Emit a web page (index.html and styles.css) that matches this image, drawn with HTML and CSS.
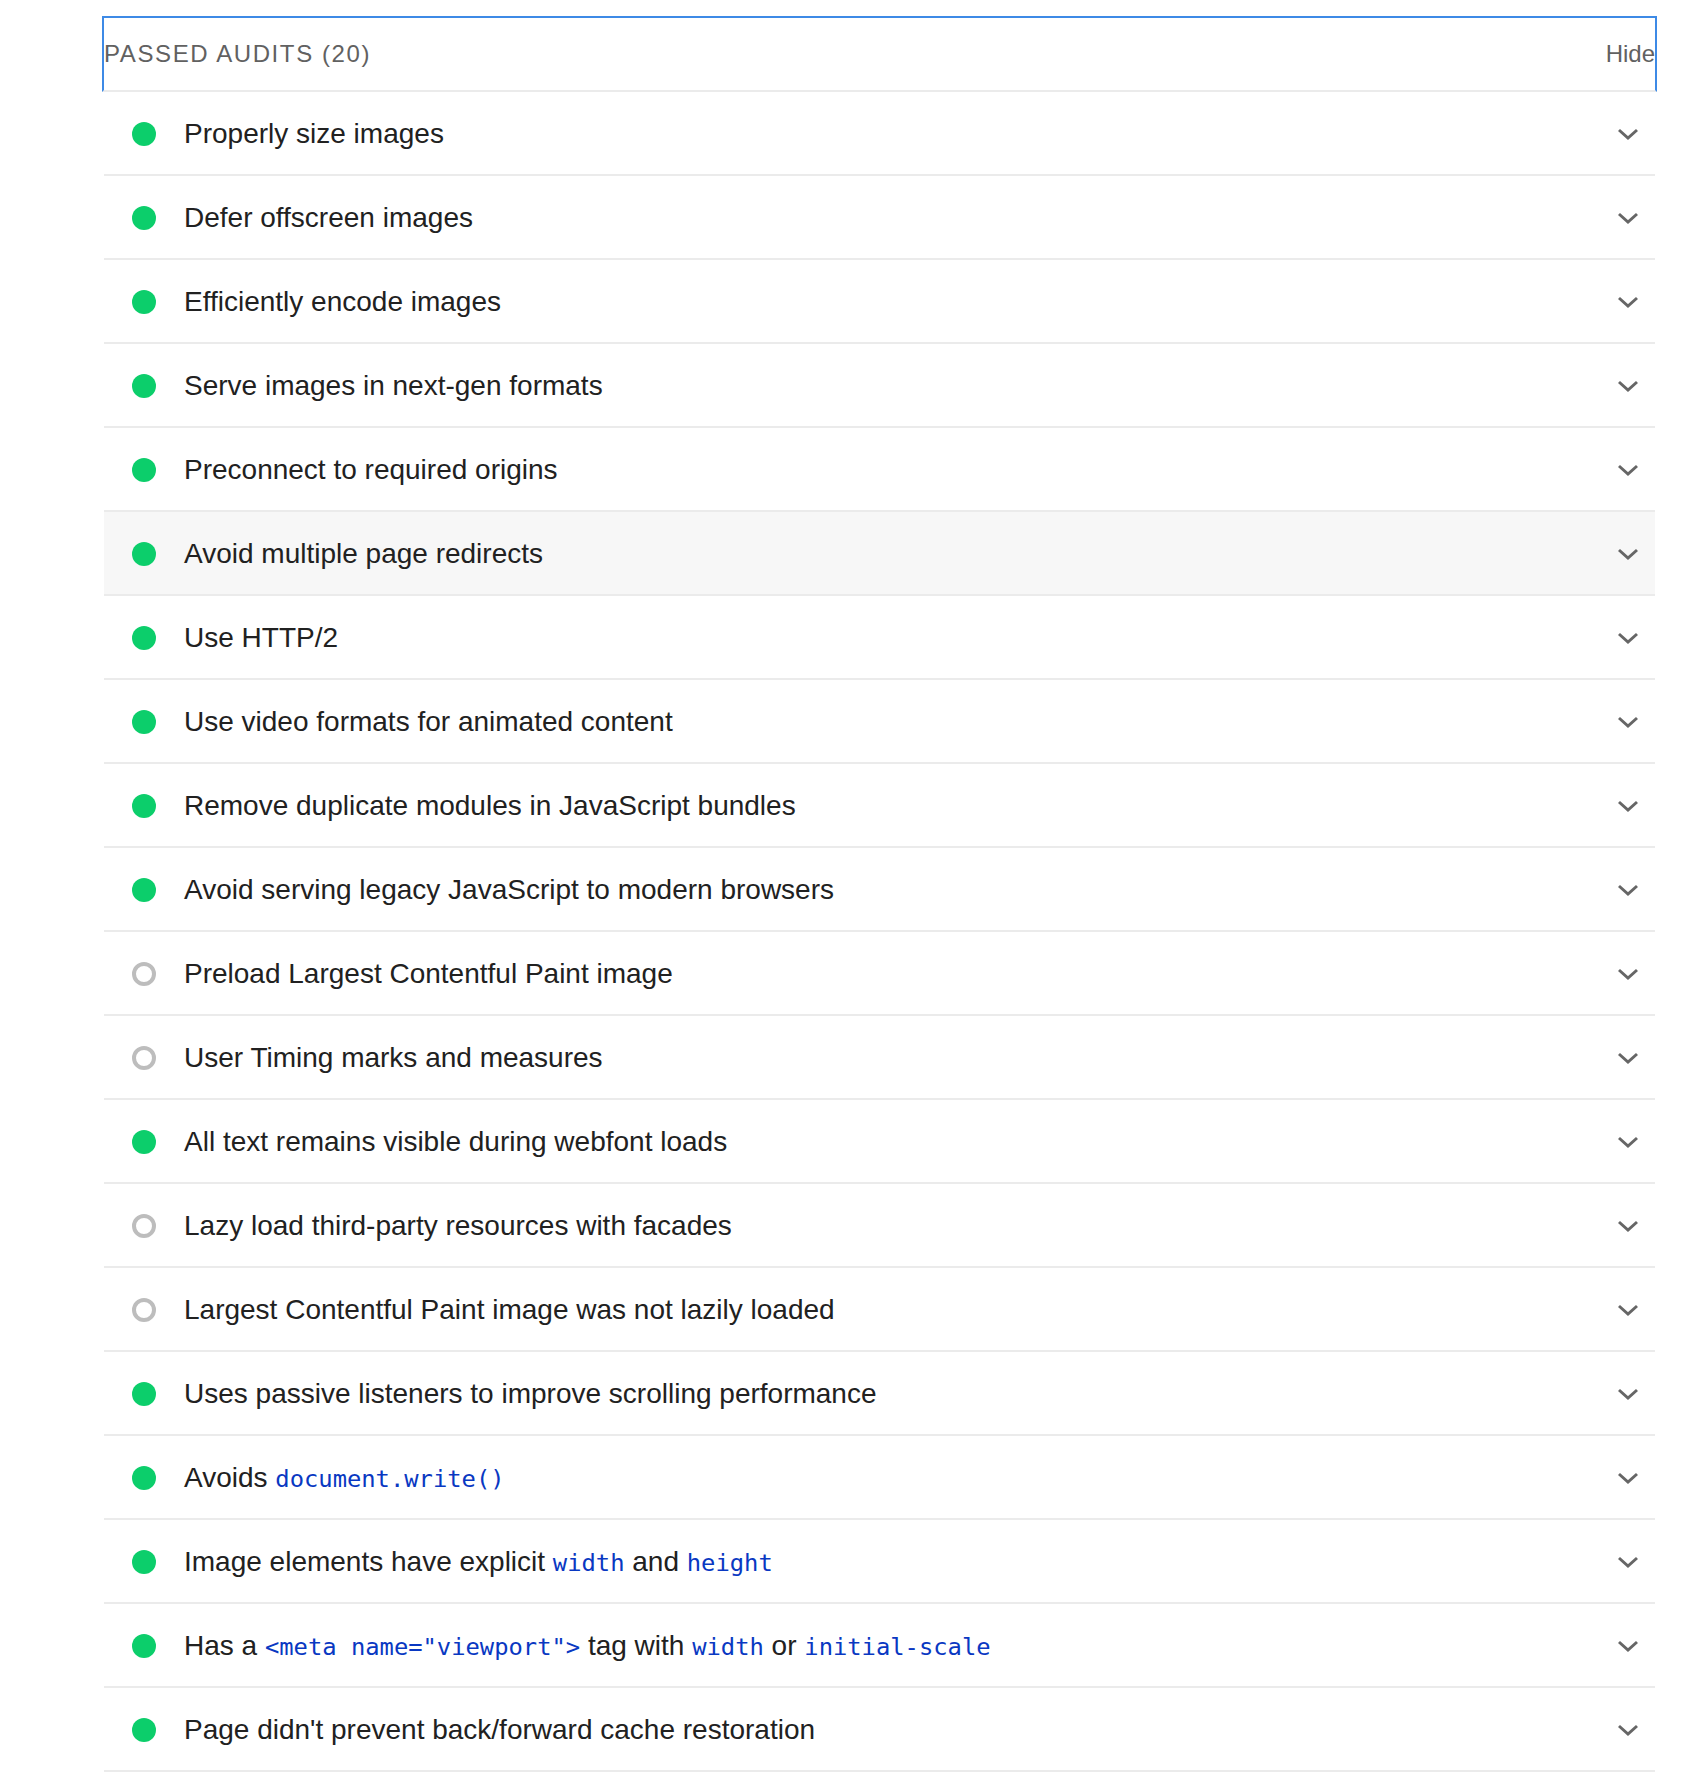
FILE: index.html
```html
<!DOCTYPE html>
<html lang="en">
<head>
<meta charset="utf-8">
<title>Passed audits</title>
<link rel="stylesheet" href="styles.css">
</head>
<body>
<div class="group">
  <div class="summary">
    <span class="summary-title">Passed audits (20)</span>
    <span class="summary-toggle">Hide</span>
  </div>
  <div class="audit"><span class="dot pass"></span><span class="title">Properly size images</span><svg class="chev" viewBox="0 0 22 12"><polyline points="2,2 11,10 20,2"/></svg></div>
  <div class="audit"><span class="dot pass"></span><span class="title">Defer offscreen images</span><svg class="chev" viewBox="0 0 22 12"><polyline points="2,2 11,10 20,2"/></svg></div>
  <div class="audit"><span class="dot pass"></span><span class="title">Efficiently encode images</span><svg class="chev" viewBox="0 0 22 12"><polyline points="2,2 11,10 20,2"/></svg></div>
  <div class="audit"><span class="dot pass"></span><span class="title">Serve images in next-gen formats</span><svg class="chev" viewBox="0 0 22 12"><polyline points="2,2 11,10 20,2"/></svg></div>
  <div class="audit"><span class="dot pass"></span><span class="title">Preconnect to required origins</span><svg class="chev" viewBox="0 0 22 12"><polyline points="2,2 11,10 20,2"/></svg></div>
  <div class="audit hover"><span class="dot pass"></span><span class="title">Avoid multiple page redirects</span><svg class="chev" viewBox="0 0 22 12"><polyline points="2,2 11,10 20,2"/></svg></div>
  <div class="audit"><span class="dot pass"></span><span class="title">Use HTTP/2</span><svg class="chev" viewBox="0 0 22 12"><polyline points="2,2 11,10 20,2"/></svg></div>
  <div class="audit"><span class="dot pass"></span><span class="title">Use video formats for animated content</span><svg class="chev" viewBox="0 0 22 12"><polyline points="2,2 11,10 20,2"/></svg></div>
  <div class="audit"><span class="dot pass"></span><span class="title">Remove duplicate modules in JavaScript bundles</span><svg class="chev" viewBox="0 0 22 12"><polyline points="2,2 11,10 20,2"/></svg></div>
  <div class="audit"><span class="dot pass"></span><span class="title">Avoid serving legacy JavaScript to modern browsers</span><svg class="chev" viewBox="0 0 22 12"><polyline points="2,2 11,10 20,2"/></svg></div>
  <div class="audit"><span class="dot na"></span><span class="title">Preload Largest Contentful Paint image</span><svg class="chev" viewBox="0 0 22 12"><polyline points="2,2 11,10 20,2"/></svg></div>
  <div class="audit"><span class="dot na"></span><span class="title">User Timing marks and measures</span><svg class="chev" viewBox="0 0 22 12"><polyline points="2,2 11,10 20,2"/></svg></div>
  <div class="audit"><span class="dot pass"></span><span class="title">All text remains visible during webfont loads</span><svg class="chev" viewBox="0 0 22 12"><polyline points="2,2 11,10 20,2"/></svg></div>
  <div class="audit"><span class="dot na"></span><span class="title">Lazy load third-party resources with facades</span><svg class="chev" viewBox="0 0 22 12"><polyline points="2,2 11,10 20,2"/></svg></div>
  <div class="audit"><span class="dot na"></span><span class="title">Largest Contentful Paint image was not lazily loaded</span><svg class="chev" viewBox="0 0 22 12"><polyline points="2,2 11,10 20,2"/></svg></div>
  <div class="audit"><span class="dot pass"></span><span class="title">Uses passive listeners to improve scrolling performance</span><svg class="chev" viewBox="0 0 22 12"><polyline points="2,2 11,10 20,2"/></svg></div>
  <div class="audit"><span class="dot pass"></span><span class="title">Avoids <code>document.write()</code></span><svg class="chev" viewBox="0 0 22 12"><polyline points="2,2 11,10 20,2"/></svg></div>
  <div class="audit"><span class="dot pass"></span><span class="title">Image elements have explicit <code>width</code> and <code>height</code></span><svg class="chev" viewBox="0 0 22 12"><polyline points="2,2 11,10 20,2"/></svg></div>
  <div class="audit"><span class="dot pass"></span><span class="title">Has a <code>&lt;meta name="viewport"&gt;</code> tag with <code>width</code> or <code>initial-scale</code></span><svg class="chev" viewBox="0 0 22 12"><polyline points="2,2 11,10 20,2"/></svg></div>
  <div class="audit"><span class="dot pass"></span><span class="title">Page didn't prevent back/forward cache restoration</span><svg class="chev" viewBox="0 0 22 12"><polyline points="2,2 11,10 20,2"/></svg></div>
</div>
</body>
</html>
```
FILE: styles.css
```css
html, body {
  margin: 0;
  padding: 0;
  background: #ffffff;
}
body {
  font-family: "Liberation Sans", Arial, Helvetica, sans-serif;
  color: #212121;
}
.group {
  margin: 16px 0 0 102px;
  width: 1555px;
}
.summary {
  height: 72px;
  display: flex;
  align-items: center;
  justify-content: space-between;
  border: 2px solid #3d8ae6;
  border-bottom: 2px solid #ebebeb;
  box-sizing: content-box;
}
.summary-title {
  font-size: 24px;
  text-transform: uppercase;
  letter-spacing: 1.6px;
  color: #616161;
}
.summary-toggle {
  font-size: 24px;
  color: #616161;
}
.audit {
  margin: 0 2px;
  height: 82px;
  border-bottom: 2px solid #ebebeb;
  display: flex;
  align-items: center;
  padding: 0 15px 0 28px;
}
.audit.hover {
  background: #f7f7f7;
}
.dot {
  width: 24px;
  height: 24px;
  border-radius: 50%;
  box-sizing: border-box;
  flex: none;
  margin-right: 28px;
  margin-top: 2px;
}
.dot.pass {
  background: #0cce6b;
}
.dot.na {
  border: 4px solid #bdbdbd;
}
.title {
  flex: 1;
  font-size: 28px;
  line-height: 34px;
  margin-top: 2px;
}
.title code {
  font-family: "DejaVu Sans Mono", Menlo, monospace;
  font-size: 23.8px;
  color: #0938c2;
}
.chev {
  width: 22px;
  height: 12px;
  flex: none;
  margin-right: 1px;
  margin-top: 2px;
}
.chev polyline {
  fill: none;
  stroke: #666666;
  stroke-width: 3;
}
```
